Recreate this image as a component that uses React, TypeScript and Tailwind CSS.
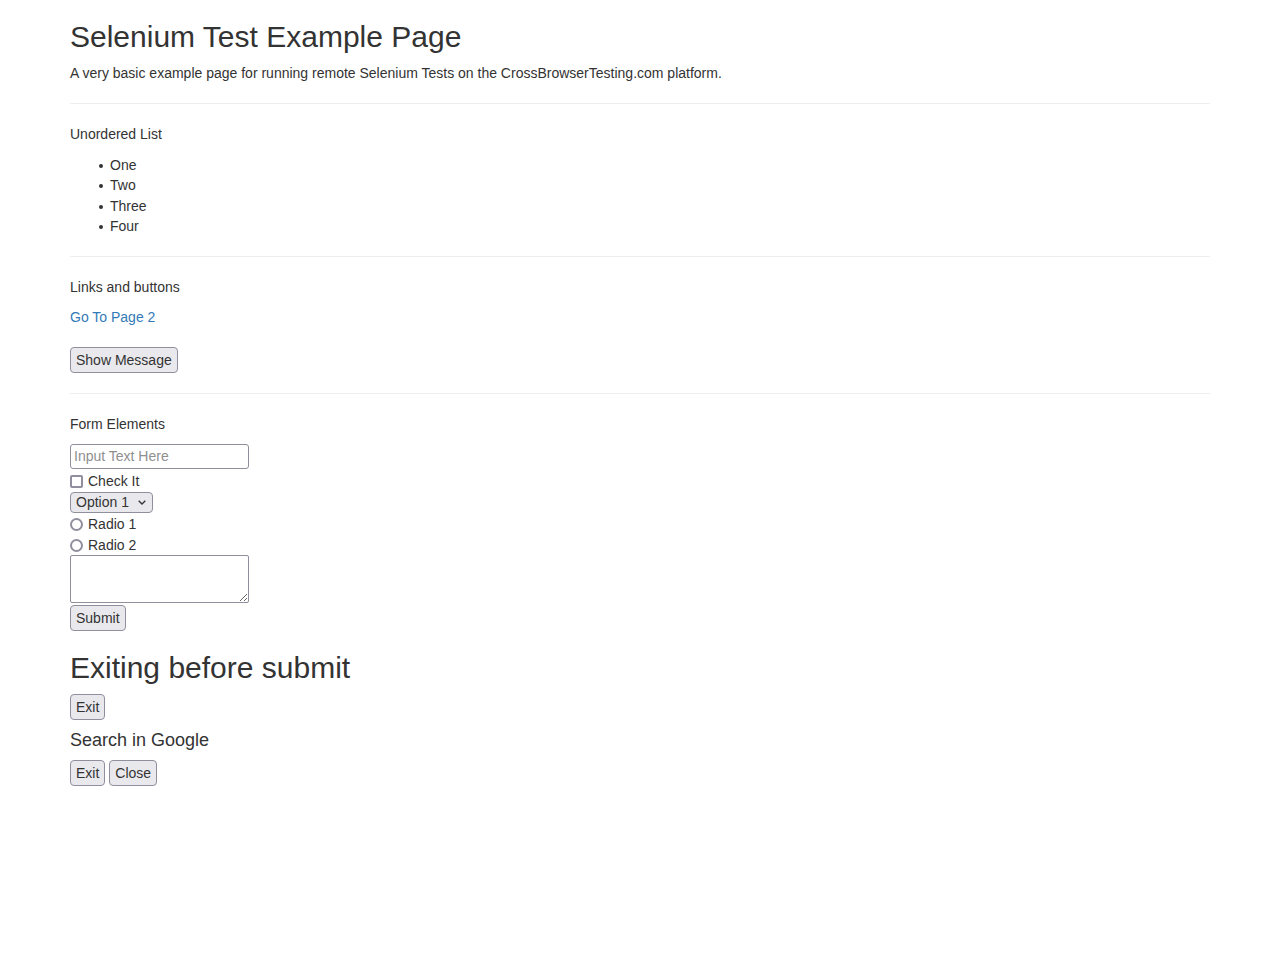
import { useState } from "react";

const items = ["One", "Two", "Three", "Four"];

const btn =
  "bg-[#e9e9ed] border border-[#8f8f9d] rounded-[4px] px-[5px] py-[2px] leading-[20px] text-[14px] text-[#333] hover:bg-[#d0d0d7]";

const box = "border-2 border-[#8f8f9d] bg-white mr-[5px] w-[13px] h-[13px] appearance-none";

export default function App() {
  const [msg, setMsg] = useState(false);

  return (
    <div className="min-h-[955px] bg-white text-[14px] leading-[20px] text-[#333] font-['Liberation_Sans',Arial,sans-serif]">
      <div className="max-w-[1170px] mx-auto px-[15px] flow-root">
        <h1 className="mt-[20px] text-[30px] leading-[33px] font-normal">Selenium Test Example Page</h1>
        <p className="mt-[10px]">
          A very basic example page for running remote Selenium Tests on the CrossBrowserTesting.com platform.
        </p>

        <hr className="mt-[20px] border-0 border-t border-[#eee]" />

        <p className="mt-[20px]">Unordered List</p>
        <ul className="mt-[11px] pl-[40px]">
          {items.map((item) => (
            <li key={item} className="flex items-center leading-[20.4px]">
              <span className="w-[4px] h-[4px] rounded-full bg-[#333] -ml-[11px] mr-[7px] mt-[1px]" />
              {item}
            </li>
          ))}
        </ul>

        <hr className="mt-[19px] border-0 border-t border-[#eee]" />

        <p className="mt-[20px]">Links and buttons</p>
        <p className="mt-[10px]">
          <a href="#" className="text-[#337ab7] hover:underline">
            Go To Page 2
          </a>
        </p>
        <div className="mt-[20px]">
          <button className={btn} onClick={() => setMsg(!msg)}>
            Show Message
          </button>
        </div>

        <hr className="mt-[20px] border-0 border-t border-[#eee]" />

        <p className="mt-[20px]">Form Elements</p>
        <form className="mt-[10px]" onSubmit={(e) => e.preventDefault()}>
          <input
            type="text"
            placeholder="Input Text Here"
            className="block w-[179px] h-[25px] px-[3px] border border-[#8f8f9d] rounded-[3px] bg-white text-[14px] placeholder:text-[#8f8f8f] outline-none"
          />
          <label className="flex items-center h-[23px] pt-[2px]">
            <input type="checkbox" className={`${box} rounded-[2px] checked:bg-[#0060df] checked:border-[#0060df]`} />
            Check It
          </label>
          <div className="relative w-[83px] h-[21px]">
            <select className="appearance-none w-[83px] h-[21px] pl-[5px] pr-[20px] leading-[19px] bg-[#e9e9ed] border border-[#8f8f9d] rounded-[4px] text-[14px] text-[#333] outline-none">
              <option>Option 1</option>
              <option>Option 2</option>
              <option>Option 3</option>
            </select>
            <svg
              className="absolute right-[7px] top-[8px] pointer-events-none"
              width="8"
              height="5"
              viewBox="0 0 8 5"
              fill="none"
              stroke="#333"
              strokeWidth="1.3"
            >
              <polyline points="0.7,0.7 4,4 7.3,0.7" />
            </svg>
          </div>
          <label className="flex items-center h-[21px] pt-[2px]">
            <input type="radio" name="radio" className={`${box} rounded-full checked:border-[4px] checked:border-[#0060df]`} />
            Radio 1
          </label>
          <label className="flex items-center h-[21px] pt-[2px]">
            <input type="radio" name="radio" className={`${box} rounded-full checked:border-[4px] checked:border-[#0060df]`} />
            Radio 2
          </label>
          <textarea className="block w-[179px] h-[48px] border border-[#8f8f9d] rounded-[2px] bg-white outline-none" />
          <div className="mt-[2px]">
            <button type="submit" className={btn}>
              Submit
            </button>
          </div>
        </form>

        <h2 className="mt-[20px] text-[30px] leading-[33px] font-normal">Exiting before submit</h2>
        <div className="mt-[10px]">
          <button className={btn}>Exit</button>
        </div>

        <h4 className="mt-[10px] text-[18px] leading-[20px] font-normal">Search in Google</h4>
        <div className="mt-[10px] flex gap-[4px]">
          <button className={btn}>Exit</button>
          <button className={btn}>Close</button>
        </div>
      </div>
    </div>
  );
}
